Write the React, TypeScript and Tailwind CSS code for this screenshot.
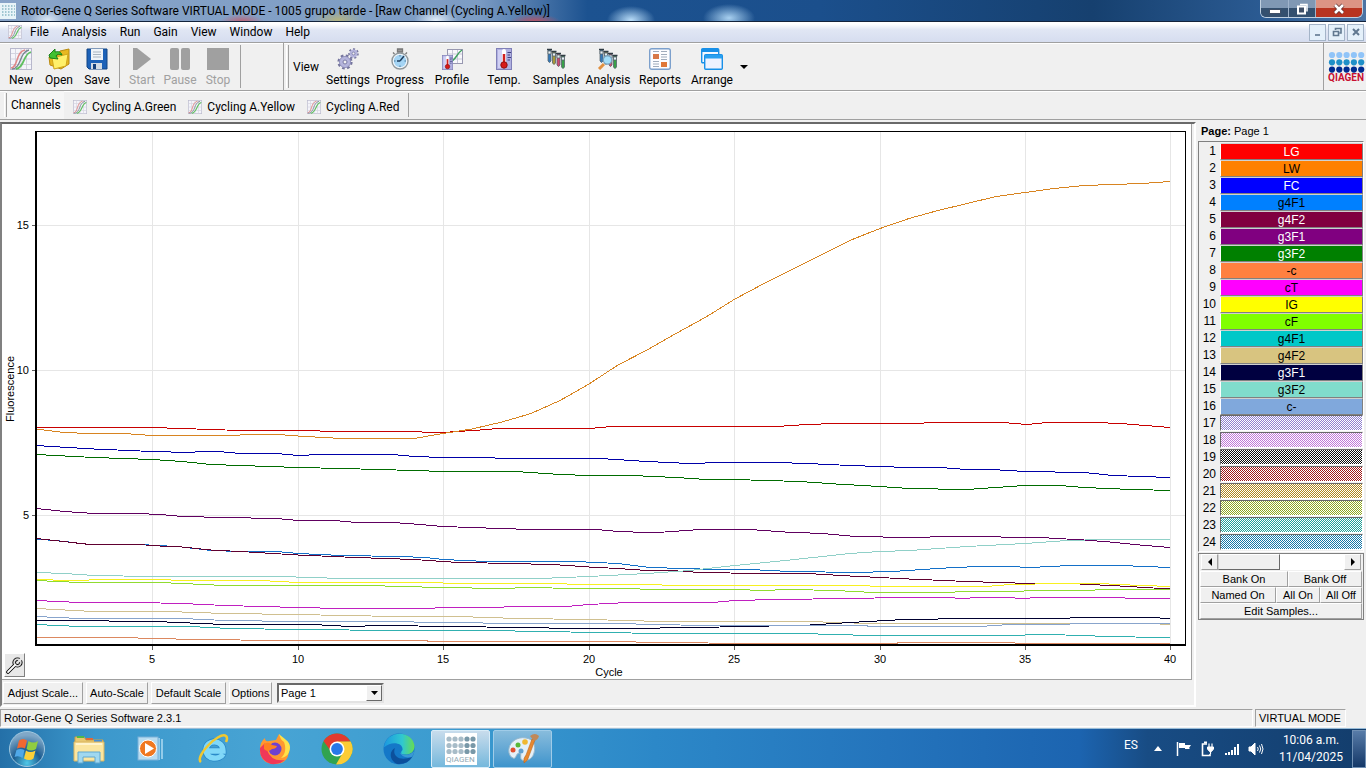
import type { ReactNode } from "react";

const samples = [
  { name: "LG", style: "bg-[#ff0000] text-white" },
  { name: "LW", style: "bg-[#ff8000] text-black" },
  { name: "FC", style: "bg-[#0000ff] text-white" },
  { name: "g4F1", style: "bg-[#0080ff] text-black" },
  { name: "g4F2", style: "bg-[#800040] text-white" },
  { name: "g3F1", style: "bg-[#800080] text-white" },
  { name: "g3F2", style: "bg-[#008000] text-white" },
  { name: "-c", style: "bg-[#ff8040] text-black" },
  { name: "cT", style: "bg-[#ff00ff] text-black" },
  { name: "IG", style: "bg-[#ffff00] text-black" },
  { name: "cF", style: "bg-[#80ff00] text-black" },
  { name: "g4F1", style: "bg-[#00c8c8] text-black" },
  { name: "g4F2", style: "bg-[#d8c480] text-black" },
  { name: "g3F1", style: "bg-[#000040] text-white" },
  { name: "g3F2", style: "bg-[#80dccc] text-black" },
  { name: "c-", style: "bg-[#80a8dc] text-black" },
];

const emptySamples = [
  "bg-[#9080d0]",
  "bg-[#c078d8]",
  "bg-[#101010]",
  "bg-[#a01818]",
  "bg-[#b08820]",
  "bg-[#90a820]",
  "bg-[#20a098]",
  "bg-[#1878a8]",
];

const series = [
  {
    color: "#c80000",
    points:
      "36,427.5 152,427.5 182,428.5 225,430 298,430.5 342,431.5 400,431.5 443,432.5 458,431.5 480,430 498,428.5 589,428.5 612,426.5 776,426.5 807,424.5 836,423.5 924,423 1003,422.5 1027,424.5 1047,422.5 1098,422.5 1127,424 1170,427.5",
  },
  {
    color: "#d88420",
    points:
      "36,429 60,432 94,434 124,433.5 152,435.5 240,435 278,434.5 298,436 350,439 414,438.5 443,433.5 472,429 502,422 531,413.5 560,400.5 589,384 618,365 647,350 676,333.5 706,317 735,299 764,283.5 793,269 822,254.5 851,240 880,228.5 909,218.5 938,210.5 967,203.5 996,196.5 1025,192.5 1054,188.5 1084,185.5 1113,184.5 1142,183.5 1170,181.5",
  },
  {
    color: "#0000a8",
    points:
      "36,445.5 60,447 94,449 152,451.5 190,452.5 200,451.5 218,451.5 240,453.5 276,453.5 298,455.5 320,454.5 393,454.5 414,456.5 443,457.5 489,457.5 500,458.5 600,458.5 647,461.5 690,463.5 720,462.5 776,462.5 807,463.5 850,465.5 909,467.5 940,467.5 967,469.5 1000,470 1025,471.5 1084,472.5 1113,475.5 1170,477.5",
  },
  {
    color: "#1470c8",
    points:
      "36,539 60,541 90,544.5 138,544.5 160,545.5 182,547 211,550.5 240,551.5 276,551.5 298,553.5 342,555.5 400,556.5 425,557.5 443,559.5 487,561.5 575,561.5 618,563.5 650,567.5 700,569 760,570 790,571.5 860,572.5 900,571 930,569 954,567.5 980,566.5 1010,566.5 1030,567.5 1070,565.5 1120,565.5 1170,567.5",
  },
  {
    color: "#600030",
    points:
      "36,538.5 90,544.5 138,544.5 160,546 182,547 211,550 240,551.5 298,555 356,557.5 414,559.5 458,562.5 516,563.5 560,565 589,567 618,568.5 647,570.5 670,570.5 700,572.5 760,573.5 807,573.5 850,576 909,579 967,581.5 1030,583.5 1080,584 1120,586 1170,589",
  },
  {
    color: "#600060",
    points:
      "36,508.5 65,511.5 94,513.5 138,513.5 160,514.5 182,516.5 225,517.5 276,518.5 298,520.5 335,520.5 356,522.5 393,522.5 414,524 443,526.5 500,528.5 531,529.5 597,529.5 618,531.5 647,532.5 665,532 700,529.5 750,529.5 785,532 822,533.5 850,536 900,537.5 960,536.5 1040,537.5 1084,540 1110,542 1140,545 1170,547.5",
  },
  {
    color: "#006c00",
    points:
      "36,454.5 94,457.5 152,459.5 182,461.5 211,464.5 240,465.5 298,467.5 342,468.5 414,470.5 443,471.5 515,471.5 560,474.5 589,475.5 632,475.5 676,477.5 706,479.5 750,480 800,481.5 836,484 880,486.5 909,488.5 967,489.5 1010,486.5 1025,485.5 1060,485.5 1084,487.5 1120,489 1170,490.5",
  },
  {
    color: "#dc8860",
    points:
      "36,637.5 138,638 195,639.5 284,640.5 425,640.5 430,641.5 632,641.5 640,642.5 776,643.5 895,643.5 900,642.5 1010,642.5 1020,643.5 1170,643.5",
  },
  {
    color: "#c020c0",
    points:
      "36,600.5 80,602.5 138,602.5 182,603.5 225,605.5 298,607.5 342,608.5 428,608.5 443,607.5 567,606.5 589,604.5 618,603 712,602.5 735,600.5 776,599.5 850,598.5 900,597.5 950,597.5 960,598.5 980,597.5 1010,597.5 1020,598.5 1040,597.5 1120,597.5 1130,598.5 1170,598.5",
  },
  {
    color: "#f8f020",
    points:
      "36,579.5 70,580.5 109,579.5 160,579.5 182,580.5 260,580.5 298,582.5 443,583 545,583.5 589,584.5 662,585 860,585.5 880,586.5 980,587 1010,584.5 1060,583.5 1098,583.5 1130,585 1170,586.5",
  },
  {
    color: "#90dc30",
    points:
      "36,580.5 80,582.5 160,582.5 182,583.5 225,585.5 370,585.5 400,586.5 443,587.5 500,588.5 530,587.5 574,588.5 640,589 740,589.5 760,590.5 790,589.5 836,590.5 873,592.5 950,592.5 960,591.5 1090,590.5 1100,589.5 1170,589.5",
  },
  {
    color: "#30b0b0",
    points:
      "36,624.5 80,626.5 190,626.5 230,628.5 298,629.5 400,630.5 487,630.5 570,632 662,633.5 800,633.5 870,635.5 1010,635.5 1040,634.5 1090,635.5 1100,636.5 1170,637.5",
  },
  {
    color: "#d0c090",
    points:
      "36,608.5 94,611.5 167,611.5 225,613.5 298,614.5 342,615.5 400,616.5 458,616.5 517,618.5 589,619.5 662,621.5 807,621.5 870,623.5 1150,623.5 1170,624.5",
  },
  {
    color: "#000030",
    points:
      "36,620.5 80,620.5 167,622 225,624.5 313,624.5 350,626.5 380,625.5 455,626.5 580,628.5 660,628 750,626.5 810,625 850,622.5 895,620 960,618.5 1060,618.5 1080,617.5 1150,617.5 1170,618.5",
  },
  {
    color: "#90d0c8",
    points:
      "36,572.5 65,573.5 94,575.5 152,576.5 280,576.5 342,578.5 540,578.5 589,576.5 647,573.5 690,570.5 735,565.5 790,560 850,553.5 880,551.5 910,550.5 967,546.5 1025,543.5 1060,541 1098,539.5 1170,539.5",
  },
  {
    color: "#88a4cc",
    points:
      "36,616.5 80,618.5 182,618.5 225,620.5 298,621.5 414,622 517,623.5 632,623.5 640,624.5 720,625.5 865,625.5 870,626.5 980,626.5 1010,624.5 1066,624.5 1075,623.5 1170,623.5",
  },
];

const xTicks = [
  { label: "5", x: 152 },
  { label: "10", x: 298 },
  { label: "15", x: 443 },
  { label: "20", x: 589 },
  { label: "25", x: 734 },
  { label: "30", x: 880 },
  { label: "35", x: 1025 },
  { label: "40", x: 1170 },
];

const yTicks = [
  { label: "15", y: 225 },
  { label: "10", y: 370 },
  { label: "5", y: 515 },
];

const CurveIcon = ({ className }: { className: string }) => (
  <svg viewBox="0 0 22 22" className={className}>
    <rect x="0.5" y="0.5" width="21" height="21" fill="#f4f4fa" stroke="#b8b8cc" />
    <path d="M5.5 1v20M11 1v20M16.5 1v20M1 5.5h20M1 11h20M1 16.5h20" stroke="#d4d4e0" />
    <path d="M1 20c7 0 5-17 14-18" fill="none" stroke="#e08888" strokeWidth="1.5" />
    <path d="M2 21c10-1 7-17 17-19" fill="none" stroke="#788490" strokeWidth="1.3" />
    <path d="M6 21c9-2 7-15 15-17" fill="none" stroke="#60c060" strokeWidth="1.8" />
  </svg>
);

const OpenIcon = () => (
  <svg viewBox="0 0 22 22" className="size-[22px]">
    <path d="M1 9l9-2 2-4 9-2v15l-8 5-11-4z" fill="#e8b820" stroke="#b88a10" />
    <path d="M4 10l16-4-2 12-12 3z" fill="#fff06a" stroke="#d0a418" />
    <path d="M1 7l6-6v3c4-1 6 0 7 3-3-1-5-1-6 1l2 3-8-1z" fill="#40c030" stroke="#188018" />
  </svg>
);

const SaveIcon = () => (
  <svg viewBox="0 0 22 22" className="size-[22px]">
    <path d="M1 1h20v20H3l-2-2z" fill="#1d62b8" stroke="#124484" />
    <rect x="5" y="1" width="12" height="11" fill="#f0f4f8" />
    <path d="M7 4h8M7 6.5h8M7 9h8" stroke="#a8b4c0" />
    <rect x="5" y="15" width="11" height="6" fill="#d4dce4" />
    <rect x="7" y="16" width="3" height="5" fill="#14407c" />
  </svg>
);

const StartIcon = () => (
  <svg viewBox="0 0 22 22" className="size-[22px]">
    <path d="M2 0h4l14 11L6 22H2z" fill="#a0a0a0" />
  </svg>
);

const PauseIcon = () => (
  <svg viewBox="0 0 22 22" className="size-[22px]">
    <rect x="1" y="0" width="9" height="22" rx="2" fill="#a0a0a0" />
    <rect x="12" y="0" width="9" height="22" rx="2" fill="#a0a0a0" />
  </svg>
);

const StopIcon = () => (
  <svg viewBox="0 0 22 22" className="size-[22px]">
    <rect width="22" height="22" fill="#a0a0a0" />
  </svg>
);

const SettingsIcon = () => (
  <svg viewBox="0 0 22 22" className="size-[22px]">
    <circle cx="8" cy="14" r="6.3" fill="none" stroke="#74749c" strokeWidth="2.6" strokeDasharray="2.6 2.35" />
    <circle cx="8" cy="14" r="4" fill="#f0f0f0" stroke="#b4b4dc" strokeWidth="3.6" />
    <circle cx="8" cy="14" r="5.6" fill="none" stroke="#8484b0" strokeWidth="0.7" />
    <circle cx="8" cy="14" r="2" fill="#f0f0f0" stroke="#7474a4" />
    <circle cx="16.5" cy="5.5" r="4.3" fill="none" stroke="#74749c" strokeWidth="2" strokeDasharray="2 1.85" />
    <circle cx="16.5" cy="5.5" r="2.6" fill="#f0f0f0" stroke="#b4b4dc" strokeWidth="2.6" />
    <circle cx="16.5" cy="5.5" r="1.4" fill="#f0f0f0" stroke="#7474a4" strokeWidth="0.8" />
  </svg>
);

const ProgressIcon = () => (
  <svg viewBox="0 0 22 22" className="size-[22px]">
    <path d="M8.5 1h5v3h-5zM4 4.500l1.500 1.500M18 4.500L16.500 6" fill="#999" stroke="#777" strokeWidth="1.3" />
    <circle cx="11" cy="13" r="8" fill="#f4f8fc" stroke="#90989c" strokeWidth="1.4" />
    <circle cx="11" cy="13" r="6.2" fill="#a4d4f4" />
    <path d="M11 13l4-5M11 13h-3" stroke="#204060" strokeWidth="1.5" />
    <path d="M11 7v1.500M11 17.500V19M5 13h1.500M15.500 13H17" stroke="#4a7898" />
  </svg>
);

const Thermometer = () => (
  <g>
    <rect x="3.5" y="0.5" width="15" height="21" fill="#b0b0e0" stroke="#8080b8" />
    <rect x="5" y="2" width="5" height="18" fill="#d0d0f4" />
    <path d="M11 3v12" stroke="#fff" strokeWidth="4" strokeLinecap="round" />
    <path d="M11 6v10" stroke="#d02020" strokeWidth="2.5" />
    <circle cx="11" cy="17" r="3.2" fill="#d81818" stroke="#901010" />
    <path d="M14.5 4.5H18M14.5 7H17M14.5 9.5H18M14.5 12H17" stroke="#404080" />
  </g>
);

const TempIcon = () => (
  <svg viewBox="0 0 22 22" className="size-[22px]">
    <Thermometer />
  </svg>
);

const ProfileIcon = () => (
  <svg viewBox="0 0 22 22" className="size-[22px]">
    <rect x="6.5" y="1.5" width="15" height="14" fill="#f8f8fc" stroke="#9898b0" />
    <path d="M11.5 2v13M16.5 2v13M7 6h14M7 11h14" stroke="#c8c8d8" />
    <path d="M8 14c7-1 7-8 13-12" fill="none" stroke="#40a060" strokeWidth="1.5" />
    <svg x="1" y="7" width="11" height="15" viewBox="3 0 16 22" preserveAspectRatio="none">
      <Thermometer />
    </svg>
  </svg>
);

const Tubes = () => (
  <g stroke="#58646c" strokeWidth="0.8">
    <path d="M3 2v11q1.5 3 3 0V2z" fill="#3478b8" />
    <path d="M7.500 4v11q1.5 3 3 0V4z" fill="#a89838" />
    <path d="M12 6v11q1.5 3 3 0V6z" fill="#d04870" />
    <path d="M16.500 8v11q1.5 3 3 0V8z" fill="#38a048" />
    <path d="M3 3h3v3H3zM7.500 5h3v3h-3zM12 7h3v3h-3zM16.500 9h3v3h-3z" fill="#e4eef4" />
    <path d="M2 1.500h5M6.500 3.500h5M11 5.500h5M15.500 7.500h5" stroke="#303c44" strokeWidth="1.5" />
  </g>
);

const SamplesIcon = () => (
  <svg viewBox="0 0 22 22" className="size-[22px]">
    <Tubes />
  </svg>
);

const AnalysisIcon = () => (
  <svg viewBox="0 0 22 22" className="size-[22px]">
    <Tubes />
    <path d="M7 16l-5 5" stroke="#e09040" strokeWidth="3" />
    <circle cx="10.5" cy="12" r="4.2" fill="#a0dcf8" stroke="#78a4c0" strokeWidth="1.3" />
  </svg>
);

const ReportsIcon = () => (
  <svg viewBox="0 0 22 22" className="size-[22px]">
    <rect x="0.7" y="0.7" width="20.6" height="20.6" rx="2" fill="#fdfdff" stroke="#7ca0cc" strokeWidth="1.4" />
    <rect x="4" y="6" width="6" height="5" fill="#d87848" />
    <rect x="12" y="14" width="6" height="5" fill="#e07838" />
    <path d="M4 3.500h6M12 3.500h6M12 6.500h6M12 9h6M12 11.500h6M4 13.500h6M4 16h6M4 18.500h6" stroke="#a0acbc" />
  </svg>
);

const ArrangeIcon = () => (
  <svg viewBox="0 0 22 22" className="size-[22px]">
    <rect x="0.7" y="0.7" width="17" height="14" rx="1" fill="#f4f8ff" stroke="#1890e8" strokeWidth="1.4" />
    <rect x="1" y="1" width="16.5" height="3" fill="#1890e8" />
    <rect x="3.7" y="6.7" width="17.6" height="14.6" rx="1" fill="#eef2ff" stroke="#1890e8" strokeWidth="1.4" />
    <rect x="4" y="7" width="17" height="3.5" fill="#28a0f0" />
  </svg>
);

const dotColumns = [0, 1, 2, 3, 4];

const QiagenLogo = () => (
  <svg viewBox="0 0 38 32" className="h-8 w-[38px]">
    {dotColumns.map((col) => (
      <g key={col}>
        <circle cx={4 + col * 7.3} cy="4" r="3.1" fill="#90c4f8" />
        <circle cx={4 + col * 7.3} cy="11.3" r="3.1" fill="#2090c8" />
        <circle cx={4 + col * 7.3} cy="18.6" r="3.1" fill="#002c90" />
      </g>
    ))}
    <text x="0" y="30" fontSize="10" fontWeight="bold" fill="#c81030">
      QIAGEN
    </text>
  </svg>
);

const DotsIcon = () => (
  <svg viewBox="0 0 16 16" className="size-4">
    <rect width="16" height="16" fill="#e8f4f8" />
    <path d="M2 3h13M2 6h13M2 9h13M2 12h13" stroke="#88b8c4" strokeWidth="1.5" strokeDasharray="1.5 1.5" />
  </svg>
);

const fileTools = [
  { label: "New", icon: <CurveIcon className="size-[22px]" /> },
  { label: "Open", icon: <OpenIcon /> },
  { label: "Save", icon: <SaveIcon /> },
];

const runTools = [
  { label: "Start", icon: <StartIcon /> },
  { label: "Pause", icon: <PauseIcon /> },
  { label: "Stop", icon: <StopIcon /> },
];

const viewTools = [
  { label: "Settings", icon: <SettingsIcon /> },
  { label: "Progress", icon: <ProgressIcon /> },
  { label: "Profile", icon: <ProfileIcon /> },
  { label: "Temp.", icon: <TempIcon /> },
  { label: "Samples", icon: <SamplesIcon /> },
  { label: "Analysis", icon: <AnalysisIcon /> },
  { label: "Reports", icon: <ReportsIcon /> },
  { label: "Arrange", icon: <ArrangeIcon /> },
];

const menus = ["File", "Analysis", "Run", "Gain", "View", "Window", "Help"];
const channels = ["Cycling A.Green", "Cycling A.Yellow", "Cycling A.Red"];

const TitleBar = () => (
  <header className="flex h-[22px] items-start justify-between border-b border-[#14243c] bg-[radial-gradient(ellipse_20px_12px_at_48px_20px,#dce8f4,transparent),radial-gradient(ellipse_22px_8px_at_242px_22px,#c06070,transparent),radial-gradient(ellipse_26px_10px_at_338px_20px,#b4b480,transparent),radial-gradient(ellipse_22px_12px_at_436px_20px,#e0ecf8,transparent),radial-gradient(ellipse_26px_8px_at_535px_22px,#c05060,transparent),radial-gradient(ellipse_24px_14px_at_631px_20px,#b8dcf8,transparent),radial-gradient(ellipse_26px_14px_at_729px_18px,#a8d0f0,transparent),linear-gradient(90deg,#88a4c8,#7c9cc4_35%,#1c5290_43%,#1b4f8c_60%,#16406f_80%,#2c5c94_93%,#4c74a4)]">
    <div className="flex h-[21px] items-center">
      <DotsIcon />
      <h1 className="ml-[5px] text-xs whitespace-nowrap">
        Rotor-Gene Q Series Software VIRTUAL MODE - 1005 grupo tarde - [Raw Channel (Cycling A.Yellow)]
      </h1>
    </div>
    <div className="mr-[3px] flex h-[18px] overflow-hidden rounded-b-md border border-t-0 border-[#c0d0e0]">
      <button aria-label="Minimize" className="flex w-7 items-center justify-center border-r border-[#a0b4cc] bg-linear-to-b from-[#8098b4] from-45% to-[#34506f] to-50%">
        <svg viewBox="0 0 12 12" className="size-3">
          <rect x="0.5" y="6.5" width="11" height="4" fill="#fff" stroke="#405068" />
        </svg>
      </button>
      <button aria-label="Restore" className="flex w-[27px] items-center justify-center border-r border-[#a0b4cc] bg-linear-to-b from-[#8098b4] from-45% to-[#34506f] to-50%">
        <svg viewBox="0 0 12 12" className="size-3">
          <path d="M4 1.500h7v7" fill="none" stroke="#fff" strokeWidth="1.5" />
          <rect x="2" y="3.5" width="7" height="7" fill="#405068" stroke="#fff" strokeWidth="2" />
        </svg>
      </button>
      <button aria-label="Close" className="flex w-[46px] items-center justify-center bg-linear-to-b from-[#dc9484] from-45% to-[#b83420] to-50%">
        <svg viewBox="0 0 12 12" className="size-3">
          <path d="M2 2l8 8M10 2l-8 8" stroke="#603030" strokeWidth="4" />
          <path d="M2 2l8 8M10 2l-8 8" stroke="#fff" strokeWidth="2.6" />
        </svg>
      </button>
    </div>
  </header>
);

const MdiButton = ({ label, children }: { label: string; children: ReactNode }) => (
  <button
    aria-label={label}
    className="flex size-[17px] items-center justify-center border border-[#a4b4c8] bg-[#e4f0fa]"
  >
    <svg viewBox="0 0 10 10" className="size-[10px]" fill="none" stroke="#607890" strokeWidth="1.6">
      {children}
    </svg>
  </button>
);

const MenuBar = () => (
  <nav className="flex h-[21px] items-center justify-between border-b border-[#a0a0a0] bg-linear-to-b from-white from-10% via-[#e0e6f4] via-40% to-[#d6ddef] pr-0.5">
    <div className="flex items-center pl-2">
      <CurveIcon className="mr-2 size-[14px]" />
      {menus.map((menu) => (
        <button key={menu} className="mr-[13px] text-xs">
          {menu}
        </button>
      ))}
    </div>
    <div className="flex gap-0.5">
      <MdiButton label="Minimize document">
        <path d="M2 8h5" />
      </MdiButton>
      <MdiButton label="Restore document">
        <path d="M3.500 3V1.500H9V6H7.500M1.500 4.500h5v4h-5z" />
      </MdiButton>
      <MdiButton label="Close document">
        <path d="M2 2l6 6M8 2l-6 6" strokeWidth="2" />
      </MdiButton>
    </div>
  </nav>
);

const ToolButton = ({
  label,
  icon,
  className,
  disabled,
}: {
  label: string;
  icon: ReactNode;
  className: string;
  disabled?: boolean;
}) => (
  <button
    disabled={disabled}
    className={`flex flex-col items-center gap-0.5 pt-0.5 text-xs disabled:text-[#a0a0a0] ${className}`}
  >
    {icon}
    {label}
  </button>
);

const Separator = () => <div className="my-0.5 w-px self-stretch bg-[#a0a0a0]" />;

const Grip = () => (
  <div className="my-0.5 w-[3px] self-stretch border-r border-l border-r-[#a0a0a0] border-l-white" />
);

const Toolbar = () => (
  <div className="flex h-12 border-b border-[#a0a0a0] pl-0.5 shadow-[inset_0_1px_#fff]">
    <div className="flex w-[282px] items-center gap-[3px] border-r border-[#a0a0a0]">
      <div className="flex">
        {fileTools.map((tool) => (
          <ToolButton key={tool.label} {...tool} className="w-[38px]" />
        ))}
      </div>
      <Separator />
      <div className="flex">
        {runTools.map((tool) => (
          <ToolButton key={tool.label} {...tool} className="w-[38px]" disabled />
        ))}
      </div>
      <Separator />
    </div>
    <div className="flex flex-1 items-center border-r border-[#a0a0a0] pl-0.5">
      <Grip />
      <span className="ml-1 w-[29px] text-xs">View</span>
      {viewTools.map((tool) => (
        <ToolButton key={tool.label} {...tool} className="w-[52px]" />
      ))}
      <button aria-label="More arrangements" className="ml-0.5">
        <svg viewBox="0 0 8 4" className="h-1 w-2">
          <path d="M0 0h8L4 4z" />
        </svg>
      </button>
    </div>
    <div className="flex w-[42px] items-center justify-end">
      <QiagenLogo />
    </div>
  </div>
);

const ChannelBar = () => (
  <div className="flex h-[29px] border-b border-[#a0a0a0] pl-1 shadow-[inset_0_1px_#fff]">
    <Grip />
    <span className="w-[57px] bg-[#f6f6f6] pl-1 text-xs leading-7">Channels</span>
    <div className="my-0.5 flex items-center gap-3 border-r border-[#a0a0a0] pt-[3px] pr-2 pl-[9px]">
      {channels.map((channel) => (
        <button key={channel} className="flex items-center gap-[5px] text-xs">
          <CurveIcon className="size-[14px]" />
          {channel}
        </button>
      ))}
    </div>
  </div>
);

const Chart = () => (
  <svg viewBox="2 124 1189 555" className="block w-full" fontSize="11" shapeRendering="crispEdges">
    {xTicks.map((tick) => (
      <g key={tick.label}>
        <path d={`M${tick.x + 0.5} 132V644`} stroke="#e6e6e6" />
        <path d={`M${tick.x + 0.5} 646v4`} stroke="#606060" />
        <text x={tick.x} y="663" textAnchor="middle">
          {tick.label}
        </text>
      </g>
    ))}
    {yTicks.map((tick) => (
      <g key={tick.label}>
        <path d={`M37 ${tick.y + 0.5}H1185`} stroke="#e6e6e6" />
        <path d={`M32 ${tick.y + 0.5}h3`} stroke="#606060" />
        <text x="29" y={tick.y + 4} textAnchor="end">
          {tick.label}
        </text>
      </g>
    ))}
    {series.map((line) => (
      <polyline key={line.color} points={line.points} fill="none" stroke={line.color} />
    ))}
    <path d="M36 131.5H1185.5V645" fill="none" stroke="#000" />
    <path d="M36 131V645H1186" fill="none" stroke="#000" strokeWidth="2" />
    <text x="609" y="676" textAnchor="middle">
      Cycle
    </text>
    <text transform="translate(14 389) rotate(-90)" textAnchor="middle">
      Fluorescence
    </text>
  </svg>
);

const raised =
  "border border-t-white border-l-white border-r-[#a0a0a0] border-b-[#a0a0a0] bg-[#f0f0f0]";

const ChartFooter = () => (
  <div className="flex items-center gap-[3px] pt-0.5 pb-px pl-px text-[11px]">
    <button className={`h-[22px] w-20 ${raised}`}>Adjust Scale...</button>
    <button className={`h-[22px] w-[62px] ${raised}`}>Auto-Scale</button>
    <button className={`h-[22px] w-[75px] ${raised}`}>Default Scale</button>
    <button className={`h-[22px] w-[43px] ${raised}`}>Options</button>
    <div className="relative ml-0.5">
      <select
        aria-label="Page"
        className="block h-5 w-[107px] appearance-none border-2 border-t-[#696969] border-r-[#e3e3e3] border-b-[#e3e3e3] border-l-[#696969] bg-white pl-0.5"
      >
        <option>Page 1</option>
      </select>
      <span className="pointer-events-none absolute top-0.5 right-0.5 flex h-4 w-4 items-center justify-center border border-t-white border-r-[#696969] border-b-[#696969] border-l-white bg-[#f0f0f0]">
        <svg viewBox="0 0 7 4" className="h-1 w-[7px]">
          <path d="M0 0h7L3.500 4z" />
        </svg>
      </span>
    </div>
  </div>
);

const ChartPanel = () => (
  <main className="min-w-0 flex-1 border-2 border-t-[#696969] border-r-white border-b-white border-l-[#808080] pr-0.5">
    <div className="relative border-r border-b border-[#a0a0a0] bg-white">
      <Chart />
      <button
        aria-label="Chart tools"
        className="absolute bottom-0.5 left-0.5 flex h-6 w-[21px] items-center justify-center border border-t-white border-r-[#808080] border-b-[#808080] border-l-white bg-[#e8e8e8]"
      >
        <svg viewBox="0 0 17 17" className="size-[17px]" fill="none">
          <path d="M2 15l6.500-6.500" stroke="#000" strokeWidth="3.600" strokeLinecap="round" />
          <circle cx="11.5" cy="5.500" r="3.300" stroke="#000" strokeWidth="3.600" />
          <circle cx="11.5" cy="5.500" r="3.300" stroke="#d8d8d8" strokeWidth="1.800" />
          <path d="M2 15l7-7" stroke="#fff" strokeWidth="1.800" strokeLinecap="round" />
          <path d="M12 5l5-5" stroke="#e8e8e8" strokeWidth="2.400" />
        </svg>
      </button>
    </div>
    <ChartFooter />
  </main>
);

const SamplePanel = () => (
  <aside className="w-[170px] shrink-0 px-0.5 text-[11px]">
    <p className="h-[19px] pl-[3px] leading-[19px]">
      <b>Page:</b> Page 1
    </p>
    <div className="border border-t-[#808080] border-r-white border-b-white border-l-[#808080] pt-px">
      {samples.map((sample, index) => (
        <div key={index} className="flex h-[17px] items-start">
          <span className="w-[17px] text-right text-xs leading-4">{index + 1}</span>
          <button
            className={`ml-1 h-[17px] flex-1 border border-t-[#d0d0d0] border-r-[#808080] border-b-[#808080] border-l-white text-xs leading-4 ${sample.style}`}
          >
            {sample.name}
          </button>
        </div>
      ))}
      {emptySamples.map((color, index) => (
        <div key={color} className="flex h-[17px] items-start">
          <span className="w-[17px] text-right text-xs leading-4">{samples.length + index + 1}</span>
          <button
            aria-label={`Sample ${samples.length + index + 1}`}
            className={`ml-1 h-4 flex-1 border border-t-[#696969] border-r-white border-b-white border-l-[#696969] bg-[repeating-conic-gradient(#fff_0_25%,transparent_0_50%)] bg-[length:2px_2px] ${color}`}
          />
        </div>
      ))}
    </div>
    <div className="mt-px border border-t-[#808080] border-r-[#808080] border-b-[#808080] border-l-[#808080] px-px">
      <div className="mb-px flex h-4 px-px">
        <button aria-label="Previous" className={`flex w-[17px] items-center justify-center ${raised}`}>
          <svg viewBox="0 0 4 8" className="h-2 w-1">
            <path d="M4 0v8L0 4z" />
          </svg>
        </button>
        <div className="flex flex-1 bg-white">
          <div className="w-[62px] border border-t-white border-r-[#696969] border-b-[#696969] border-l-[#d0d0d0] bg-[#f0f0f0]" />
        </div>
        <button aria-label="Next" className={`flex w-[17px] items-center justify-center ${raised}`}>
          <svg viewBox="0 0 4 8" className="h-2 w-1">
            <path d="M0 0v8l4-4z" />
          </svg>
        </button>
      </div>
      <div className="flex">
        <button className={`h-4 w-[88px] leading-[14px] ${raised}`}>Bank On</button>
        <button className={`h-4 flex-1 leading-[14px] ${raised}`}>Bank Off</button>
      </div>
      <div className="flex">
        <button className={`h-4 w-[76px] leading-[14px] ${raised}`}>Named On</button>
        <button className={`h-4 w-11 leading-[14px] ${raised}`}>All On</button>
        <button className={`h-4 flex-1 leading-[14px] ${raised}`}>All Off</button>
      </div>
      <button className={`block h-4 w-full leading-[14px] ${raised}`}>Edit Samples...</button>
    </div>
  </aside>
);

const StatusBar = () => (
  <footer className="flex h-[21px] gap-0.5 pt-0.5 pb-px text-[11px] leading-[17px]">
    <p className="flex-1 border border-[#a0a0a0] border-r-white border-b-white pl-[3px]">
      Rotor-Gene Q Series Software 2.3.1
    </p>
    <p className="mr-5 w-[91px] border border-[#a0a0a0] border-r-white border-b-white pl-[3px] whitespace-nowrap">
      VIRTUAL MODE
    </p>
  </footer>
);

const StartOrb = () => (
  <svg viewBox="0 0 38 38" className="size-[38px]">
    <defs>
      <radialGradient id="orb" cx="50%" cy="90%" r="80%">
        <stop offset="0" stopColor="#50c8e8" />
        <stop offset="0.5" stopColor="#1c5c90" />
        <stop offset="1" stopColor="#80a8c8" />
      </radialGradient>
    </defs>
    <circle cx="19" cy="19" r="17.5" fill="url(#orb)" stroke="#a0c8e0" />
    <path d="M11 10.500q4-3 8 0l-2 8q-4-2-8 0z" fill="#f06830" />
    <path d="M20.500 11q5 3 9.500 0l-2 8q-5 3-9.500 0z" fill="#90cc40" />
    <path d="M8.500 20q4-2 8 0l-2 8q-4-3-8-1z" fill="#50a8e8" />
    <path d="M18 20.500q4 3 9.500 0l-2 8q-4 3-9.500 0z" fill="#fcd038" />
  </svg>
);

const ExplorerIcon = () => (
  <svg viewBox="0 0 32 32" className="size-8">
    <path d="M2 4h9l2 3h17v20H2z" fill="#e8c870" stroke="#c8a048" />
    <path d="M4 3h7v2H4z" fill="#50b848" />
    <path d="M13 5h7v2h-7z" fill="#e06838" />
    <path d="M21 7h8v2h-8z" fill="#4890d8" />
    <path d="M1 9h30v19H1z" fill="#fbe6a0" stroke="#d8b460" />
    <path d="M3 11h26" stroke="#fff4cc" strokeWidth="2" />
    <path d="M5 30V19h22v11h-5v-6H10v6z" fill="#a0d8f0" stroke="#60a8d0" />
  </svg>
);

const PlayerIcon = () => (
  <svg viewBox="0 0 32 32" className="size-8">
    <path d="M27 6v20M24 5v22" stroke="#b0dcf4" strokeWidth="1.5" />
    <rect x="3" y="4" width="20" height="23" fill="#b8dcf0" stroke="#78b0d8" />
    <circle cx="13" cy="15.5" r="8.5" fill="#f07820" stroke="#fff" />
    <path d="M10 10l9 5.500-9 5.500z" fill="#fff" />
  </svg>
);

const ExplorerWebIcon = () => (
  <svg viewBox="0 0 32 32" className="size-8" fill="none">
    <path d="M26 21c-3 6-17 6-17-4 0-11 17-11 17 1H10" stroke="#2888c8" strokeWidth="7" />
    <path d="M26 21c-3 6-17 6-17-4 0-11 17-11 17 1H10" stroke="#80d8f8" strokeWidth="5.4" />
    <path d="M4 29C-3 24 22-2 29 3c2 2 1 4 0 6" stroke="#f0c830" strokeWidth="2.5" />
  </svg>
);

const FirefoxIcon = () => (
  <svg viewBox="0 0 32 32" className="size-8">
    <path d="M1 16Q1 9 6 5q0 4 4 3l7-1 3-6q2 5 7 9c5 7 4 21-11 21Q1 31 1 16z" fill="#ff9830" />
    <path d="M20 1q1 5 5 8c2 5 2 12-3 16 6-1 9-5 9-11 0-6-6-8-11-13z" fill="#ffe048" />
    <path d="M1 15q-1 12 11 16 8 1 14-4Q12 29 8 17q-4-1-2-7z" fill="#f03858" />
    <circle cx="16" cy="16" r="6.5" fill="#7040d0" />
    <path d="M5 11q5-3 8 1l5 1q-1 3-5 3-4 4-8 0z" fill="#ff8020" />
  </svg>
);

const ChromeIcon = () => (
  <svg viewBox="0 0 32 32" className="size-8">
    <circle cx="16" cy="16" r="15.5" fill="#30a350" />
    <path d="M2.500 8A15.600 15.600 0 0 1 29.500 8.500L16 9 9 17z" fill="#e33b2e" />
    <path d="M29.700 8.500A15.600 15.600 0 0 1 15 31.500l7-12L16 8.500z" fill="#fccc35" />
    <circle cx="16" cy="16" r="7.5" fill="#fff" />
    <circle cx="16" cy="16" r="5.9" fill="#2878e8" />
  </svg>
);

const EdgeIcon = () => (
  <svg viewBox="0 0 32 32" className="size-8">
    <defs>
      <linearGradient id="edge" x1="0" x2="1">
        <stop offset="0" stopColor="#1c98e0" />
        <stop offset="0.6" stopColor="#30c8d0" />
        <stop offset="1" stopColor="#68dc50" />
      </linearGradient>
    </defs>
    <circle cx="16" cy="16" r="15.5" fill="#1478c8" />
    <path d="M1 14C3-3 29-4 31.500 13c0 7-6 10-13 8q-1-2 1-4c1-8-12-9-18-3z" fill="url(#edge)" />
    <path d="M12 15c-3 7 3 14 17 9q-5 8-15 7C6 27 6 18 12 15z" fill="#0c509c" />
    <path d="M18.500 21q6 3 13-3-1 4-3 6-9 2-12-5z" fill="#3a98d4" />
  </svg>
);

const RotorGeneIcon = () => (
  <svg viewBox="0 0 32 32" className="size-8">
    <rect width="32" height="32" fill="#fff" />
    {dotColumns.map((col) => (
      <g key={col} fill={col > 2 ? "#7898a8" : "#a8bcc8"}>
        <circle cx={4 + col * 6} cy="6" r="2.6" />
        <circle cx={4 + col * 6} cy="12.5" r="2.6" />
        <circle cx={4 + col * 6} cy="18.5" r="2.6" />
      </g>
    ))}
    <text x="1" y="29" fontSize="8" fill="#90a8b4">
      QIAGEN
    </text>
  </svg>
);

const PaintIcon = () => (
  <svg viewBox="0 0 32 32" className="size-8">
    <path d="M2 20C0 10 10 3 19 5c8 1 10 8 8 15-2 8-11 9-13 6-1-3 1-6-2-6s-3 7-6 5q-3-1-4-5z" fill="#e4f0f8" stroke="#98b8cc" />
    <circle cx="6" cy="17" r="2.5" fill="#e05030" />
    <circle cx="11" cy="12" r="2.5" fill="#58b838" />
    <circle cx="18" cy="9" r="2.8" fill="#f0b830" />
    <circle cx="14" cy="18" r="2.5" fill="#60a0d0" />
    <path d="M17 30q-1-5 2-8l6-16 3 1-6 16q-1 5-5 7z" fill="#e88830" stroke="#b86010" strokeWidth="0.5" />
    <path d="M23 3q5-4 9 0-1 4-5 5z" fill="#c08858" />
  </svg>
);

const pinned = [
  { label: "File Explorer", icon: <ExplorerIcon /> },
  { label: "Media Player", icon: <PlayerIcon /> },
  { label: "Internet Explorer", icon: <ExplorerWebIcon /> },
  { label: "Firefox", icon: <FirefoxIcon /> },
  { label: "Chrome", icon: <ChromeIcon /> },
  { label: "Edge", icon: <EdgeIcon /> },
];

const Tray = () => (
  <div className="flex items-center text-xs text-white">
    <span className="mr-4 self-start pt-2">ES</span>
    <svg viewBox="0 0 8 5" className="mr-[14px] h-[5px] w-2">
      <path d="M4 0l4 5H0z" fill="#fff" />
    </svg>
    <svg viewBox="0 0 16 16" className="mr-2 size-4">
      <path d="M1.500 1v14" stroke="#fff" strokeWidth="1.5" />
      <path d="M3 2h6v2h6l-2 3 1 1H9V7H3z" fill="#fff" />
    </svg>
    <svg viewBox="0 0 16 16" className="mr-2 size-4" fill="none" stroke="#fff">
      <path d="M7 3H2.500v11.500H10V13" strokeWidth="1.6" />
      <path d="M4 1.500h3" strokeWidth="2" />
      <path d="M7.500 6h6v2l-2 2.500h-2L7.500 8z" fill="#fff" />
      <path d="M9 6V2.500M12 6V2.500M10.500 10v3" strokeWidth="1.2" />
    </svg>
    <svg viewBox="0 0 16 16" className="mr-2 size-4" stroke="#fff" strokeWidth="2">
      <path d="M2 14v-2M5 14v-3M8 14V9M11 14V6M14 14V3" />
    </svg>
    <svg viewBox="0 0 16 16" className="size-4" fill="none" stroke="#fff">
      <path d="M1 6h2l4-4v12l-4-4H1z" fill="#fff" />
      <path d="M9.500 6q1.500 2 0 4M11.500 4.500q2.500 3.500 0 7M13.500 3q3 5 0 10" />
    </svg>
    <div className="w-[88px] pl-1.5 text-center leading-[17px]">
      <p>10:06 a.m.</p>
      <p>11/04/2025</p>
    </div>
    <button
      aria-label="Show desktop"
      className="h-[38px] w-[14px] border border-[#7090b4] bg-linear-to-b from-[#587ca8] to-[#143868]"
    />
  </div>
);

const Taskbar = () => (
  <div className="flex h-10 justify-between border-t border-[#98bcd8] bg-[linear-gradient(90deg,#2470a8,#3c98cc_7%,#48a4d4_20%,#3c9cd0_32%,#2c88c8_48%,#2474bc_65%,#1c64b0_79%,#184c84_84%,#133d6c)]">
    <div className="flex items-center">
      <button aria-label="Start menu" className="ml-2">
        <StartOrb />
      </button>
      <div className="ml-3 flex">
        {pinned.map((app) => (
          <button key={app.label} aria-label={app.label} className="flex w-[62px] justify-center">
            {app.icon}
          </button>
        ))}
      </div>
      <div className="ml-px flex gap-[3px]">
        <button
          aria-label="Rotor-Gene Q Series Software"
          className="flex h-[38px] w-[59px] items-center justify-center rounded-xs border border-[#d8ecf8] bg-linear-to-b from-[#c8dcec] to-[#74b8dc]"
        >
          <RotorGeneIcon />
        </button>
        <button
          aria-label="Paint"
          className="flex h-[38px] w-[59px] items-center justify-center rounded-xs border border-[#a0cce8] bg-linear-to-b from-[#88bcdc] to-[#3c94cc]"
        >
          <PaintIcon />
        </button>
      </div>
    </div>
    <Tray />
  </div>
);

const App = () => {
  return (
    <div className="flex min-h-screen flex-col bg-[#f0f0f0] font-['Liberation_Sans',Arial,sans-serif] text-black">
      <div className="font-[Roboto,sans-serif]">
        <TitleBar />
        <MenuBar />
        <Toolbar />
        <ChannelBar />
      </div>
      <div className="mt-0.5 flex flex-1">
        <ChartPanel />
        <SamplePanel />
      </div>
      <StatusBar />
      <div className="font-[Roboto,sans-serif]">
        <Taskbar />
      </div>
    </div>
  );
};

export default App;
